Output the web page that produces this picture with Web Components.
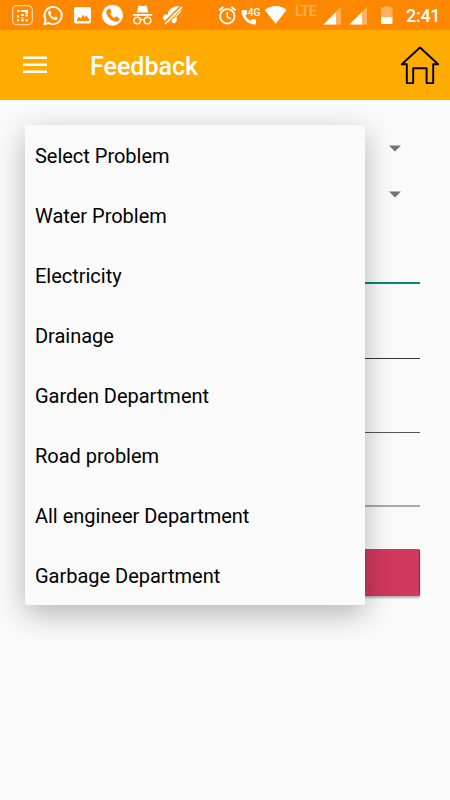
<!DOCTYPE html>
<html lang="en">
<head>
<meta charset="utf-8">
<title>Feedback</title>
<style>
html,body{margin:0;height:100%;overflow:hidden;background:#fafafa;font-family:Roboto,"Liberation Sans",sans-serif}
</style>
</head>
<body>
<feedback-screen></feedback-screen>
<script>
const define = (name, html) => customElements.define(name, class extends HTMLElement {
  constructor() {
    super();
    const t = document.createElement('template');
    t.innerHTML = html;
    this.attachShadow({mode: 'open'}).append(t.content.cloneNode(true));
  }
});

const glyphs = {
  grid: [22, '<rect x=".7" y=".7" width="19.600" height="19" rx="4" fill="none" stroke="#fff" stroke-opacity=".85"/><path d="M5 5h2.500v2H5zM9 5h7v2H9zM13.500 5H16v4h-2.500zM9.300 9h2.400v2H9.300zM13.500 9.600H16v2h-2.500zM5 12.500v-2h2v2zM5 14.200h2v2H5zM9.300 12.500h2.400v1H9.300zM9.300 14.200h2.400v2H9.300zM13.500 14.200H16v2h-2.500z" fill="#fff"/>'],
  whatsapp: [20, '<path d="M1.300 19.200 2.600 14.700A8.600 8.600 0 1 1 5.900 18z" fill="none" stroke="#fff" stroke-width="1.900" stroke-linejoin="round"/><path d="M6.300 5.500C4.500 6.500 4.700 9 7 11.800c2.600 3 5.500 4 7 2.600.6-.6.9-1.300.6-1.800l-2.300-1.200-1.200 1.400C9.300 12 8.200 10.700 7.500 9.300l.9-1.100-.9-2.300c-.2-.5-.7-.6-1.200-.4z" fill="#fff"/>'],
  image: [18, '<path fill="#fff" fill-rule="evenodd" d="M2 2h13q2 0 2 2v12.500q0 2-2 2H2q-2 0-2-2V4q0-2 2-2zm1 14h12v-2l-3-3.500-1.500 2L9 9.500l-2.300 4L5 11.500l-2 3z"/>'],
  phone: [22, '<circle cx="10.500" cy="10.200" r="10.500" fill="#fff"/><path fill="#ff8800" d="m5 5 2-1.400q.8-.3 1.200.4l1.300 2.800q.2.600-.3 1L8.300 9q1.200 2.500 3.800 4l1.500-1.300q.5-.4 1-.1l2.600 1.500q.7.500.3 1.200-1.500 2.600-3.800 2.300C8 15.700 4.500 10.500 4.300 7.200Q4.200 5.800 5 5z"/>'],
  incognito: [22, '<path fill="#fff" d="M6.200 1.400q.4-1.200 1.600-.8l2.700.6 2.900-.6q1.200-.3 1.500.8L16.300 7.400H4.800zM.8 9h19.400v1.800H.8z"/><g fill="none" stroke="#fff" stroke-width="1.400"><circle cx="5.200" cy="15.500" r="3.300"/><circle cx="15.500" cy="15.500" r="3.300"/><path d="M8.200 15q2.200-1 4.300 0"/></g>'],
  muted: [20, '<path fill="#fff" d="m18.200 1 .8 2.500q-1 5-6 8-4.500 2.500-7 .3-2.600-3.700 1-7.500Q11 .5 18.200 1zM0 12q1-3.500 4.500-2.500l3 4.500q.5 3-2.500 4-3-.5-3.500-2.500Q-.2 14.500 0 12zM8.500 14.500l5.500-3-.5 5-2 2-2.500-1z"/><path d="M2 18.300 18.500 2" stroke="#ff8800" stroke-width="4"/><path d="M2 19 19 2.200" stroke="#fff" stroke-width="1.700"/>'],
  alarm: [19, '<g fill="none" stroke="#fff"><circle cx="9.300" cy="11.300" r="7.200" stroke-width="1.800"/><path d="M9.300 7V11.800l3.500 2.200" stroke-width="1.500"/><path d="M1 5.500 5.200 2M17.600 5.500 13.400 2" stroke-width="2"/></g>'],
  call4g: [20, '<path fill="#fff" d="M1.500 5h3.500q.7 0 .8.800l.5 3-2 2q2 3.500 5 5l1.800-1.900 3 .6q.8.200.8.900v3.200q0 .900-1 .900C6.200 19.500.9 12.700.5 6q0-1 1-1z"/><text x="6.800" y="10.800" fill="#fff" font-family="Roboto,sans-serif" font-size="11.500" font-weight="500" textLength="12.600" lengthAdjust="spacingAndGlyphs">4G</text>'],
  wifi: [24, '<path fill="#fff" d="M11.700 18.800.8 5q5-4 10.900-4t10.900 4z"/>'],
  signal: [19, '<path fill="#ffb35c" d="M18 2v17.500H.500z"/><path fill="#fff" d="M13 7V19.500H.500z"/>'],
  battery: [12, '<path fill="#ffb35c" d="M0 3.200q0-1 1-1h2.500V1h4v1.200H10.500q1 0 1 1V12H0z"/><path fill="#fff" d="M0 12h11.500v6q0 1-1 1H1q-1 0-1-1z"/>']
};
customElements.define('status-icon', class extends HTMLElement {
  constructor() {
    super();
    const [w, shape] = glyphs[this.getAttribute('name')];
    this.attachShadow({mode: 'open'}).innerHTML =
      `<style>:host{display:block;flex:none;width:${w}px;height:20px}svg{display:block;overflow:visible}</style><svg width="${w}" height="20" viewBox="0 0 ${w} 20">${shape}</svg>`;
  }
});

define('status-bar', `<style>
:host{display:block;height:30px;background:#ff8800;color:#fff}
.bar{display:flex;align-items:flex-start;height:25px;padding:5px 10px 0 12px}
.left,.right{display:flex}.right{margin-left:auto}
.lte{font-size:14.500px;font-weight:500;line-height:13px;width:22px;color:#ffb04f;white-space:nowrap;letter-spacing:-.6px;margin:0 6px 0 7px}
.time{font-size:18px;font-weight:500;line-height:21px;width:34px;margin-left:13px;white-space:nowrap;letter-spacing:-.3px}
</style>
<div class="bar"><div class="left">
<status-icon name="grid"></status-icon>
<status-icon name="whatsapp" style="margin-left:9px"></status-icon>
<status-icon name="image" style="margin-left:11px"></status-icon>
<status-icon name="phone" style="margin-left:10px"></status-icon>
<status-icon name="incognito" style="margin-left:8px"></status-icon>
<status-icon name="muted" style="margin-left:9px"></status-icon>
</div><div class="right">
<status-icon name="alarm"></status-icon>
<status-icon name="call4g" style="margin-left:4px"></status-icon>
<status-icon name="wifi" style="margin-left:3px"></status-icon>
<span class="lte">LTE</span>
<status-icon name="signal"></status-icon>
<status-icon name="signal" style="margin-left:7px"></status-icon>
<status-icon name="battery" style="margin-left:13px"></status-icon>
<span class="time">2:41</span>
</div></div>`);

define('app-bar', `<style>
:host{display:flex;align-items:center;height:70px;background:#ffab00;color:#fff;padding:0 9px 0 23px;box-sizing:border-box}
svg{display:block;flex:none}
h1{margin:4px auto 0 43px;font-size:25px;line-height:30px;font-weight:500}
</style>
<svg width="24" height="18" viewBox="0 0 24 18"><path d="M0 1.800h24M0 8.800h24M0 15.700h24" stroke="#fff" stroke-width="2.500"/></svg>
<h1><slot></slot></h1>
<svg width="42" height="40" viewBox="0 0 42 40"><path d="M21 2.500 2.800 19.300H7.800v18.800h6.400V23.200h13.400v14.900h6.600V19.300h5z" fill="none" stroke="#000" stroke-width="1.900" stroke-linejoin="round"/></svg>`);

define('spinner-field', `<style>
:host{display:flex;height:46px;align-items:center;justify-content:flex-end;padding-right:19px}
svg{display:block}
</style><svg width="12" height="7" viewBox="0 0 12 7"><path d="M0 .500h12L6 6.500z" fill="#737373"/></svg>`);

define('text-field', `<style>
:host{display:block;box-sizing:border-box;height:74px;border-bottom:var(--weight,1px) solid var(--line,#333)}
</style>`);

define('submit-button', `<style>
:host{display:block;height:47px;background:#d0385c;border-radius:2px;box-shadow:0 2px 2px rgba(0,0,0,.28);border:solid #c00f3c;border-width:0 1px 0 0;box-sizing:border-box}
</style>`);

define('menu-option', `<style>
:host{display:block;height:60px;line-height:62px;padding-left:10px;font-size:20px;letter-spacing:-.02px;color:#000;white-space:nowrap}
</style><slot></slot>`);

define('dropdown-menu', `<style>
:host{display:block;width:340px;height:480px;background:#fafafa;border-radius:2px;box-shadow:0 9px 30px rgba(0,0,0,.28)}
</style><slot></slot>`);

define('feedback-screen', `<style>
:host{display:block;position:relative;height:800px;overflow:hidden;background:#fafafa}
form{padding:25px 30px 0;display:flex;flex-direction:column}
.focus{height:67px;--weight:2px;--line:#00897b}
dropdown-menu{position:absolute;left:25px;top:125px}
app-bar{position:relative}
</style>
<status-bar></status-bar>
<app-bar>Feedback</app-bar>
<form>
<spinner-field></spinner-field><spinner-field></spinner-field>
<text-field class="focus"></text-field>
<text-field style="height:75px;--line:#333"></text-field>
<text-field style="--line:#555"></text-field>
<text-field style="--weight:2px;--line:#aaa"></text-field>
<submit-button style="margin-top:42px"></submit-button>
</form>
<dropdown-menu>
<menu-option>Select Problem</menu-option>
<menu-option>Water Problem</menu-option>
<menu-option>Electricity</menu-option>
<menu-option>Drainage</menu-option>
<menu-option>Garden Department</menu-option>
<menu-option>Road problem</menu-option>
<menu-option>All engineer Department</menu-option>
<menu-option>Garbage Department</menu-option>
</dropdown-menu>`);
</script>
</body>
</html>
